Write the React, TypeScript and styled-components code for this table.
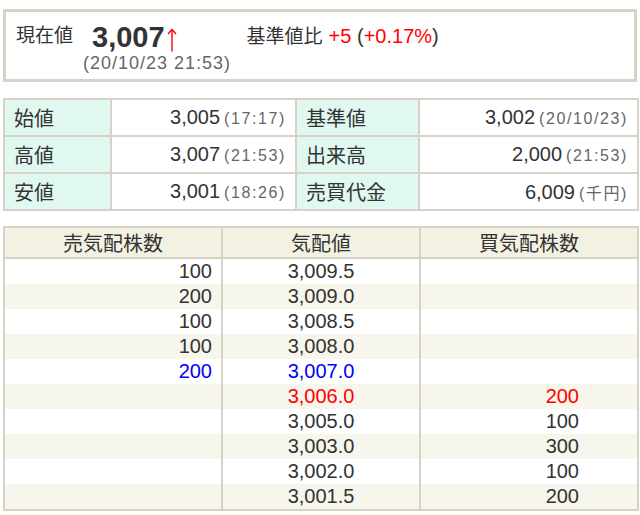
import React from 'react';
import styled, { createGlobalStyle } from 'styled-components';

const Global = createGlobalStyle`
  *, *::before, *::after { box-sizing: border-box; }
  html, body { margin: 0; padding: 0; background: #fff; }
  body {
    font-family: "Liberation Sans", "Noto Sans CJK JP", sans-serif;
    color: #333;
  }
`;

const Page = styled.div`
  width: 640px;
  padding: 9px 3px 0;
  display: flex;
  flex-direction: column;
`;

const PriceBox = styled.section`
  border: 3px solid #d6d3c6;
  height: 73px;
  padding: 9px 10px 0;
  display: flex;
  flex-direction: column;
`;

const PriceLine = styled.div`
  display: flex;
  align-items: center;
  height: 32px;
`;

const PriceLabel = styled.span`
  font-size: 19px;
  line-height: 1;
  margin-right: 19px;
  padding-bottom: 3px;
`;

const Price = styled.span`
  font-size: 29px;
  font-weight: bold;
  line-height: 1;
`;

const ArrowIcon = styled.svg`
  width: 10px;
  height: 24px;
  margin-left: 2px;
  margin-top: 6px;
`;

const Change = styled.div`
  margin-left: 70px;
  font-size: 19px;
  line-height: 1;
  padding-bottom: 3px;
  display: flex;
  align-items: baseline;
`;

const ChangeValue = styled.span`
  font-size: 20px;
  margin-left: 6px;
`;

const Red = styled.span`
  color: #ff0000;
`;

const Paren = styled.span`
  color: #333;
`;

const DateLine = styled.div`
  margin-left: 67px;
  font-size: 18px;
  line-height: 20px;
  letter-spacing: 1px;
  color: #666;
`;

const InfoTable = styled.table`
  margin-top: 16px;
  width: 634px;
  border-collapse: collapse;
  table-layout: fixed;
`;

const LabelCell = styled.th`
  background: #e0f8ef;
  border: 2px solid #d6d3c6;
  height: 37px;
  padding: 0 0 0 9px;
  text-align: left;
  font-weight: normal;
  font-size: 20px;
`;

const ValueCell = styled.td`
  border: 2px solid #d6d3c6;
  height: 37px;
  padding: 0 9px 0 0;
  text-align: right;
  font-size: 20px;
  white-space: nowrap;
`;

const Sub = styled.span`
  font-size: 16px;
  letter-spacing: 1.6px;
  color: #666;
  margin-left: 4px;
`;

const BoardTable = styled.table`
  margin-top: 15px;
  width: 634px;
  border-collapse: collapse;
  table-layout: fixed;
  border: 2px solid #d6d3c6;
`;

const HeadCell = styled.th`
  background: #f3f1e1;
  border: 2px solid #d6d3c6;
  height: 30px;
  padding: 0;
  font-weight: normal;
  font-size: 20px;
  text-align: center;
`;

const BoardRow = styled.tr<{ $alt: boolean }>`
  background: ${(p) => (p.$alt ? '#f7f6ec' : '#ffffff')};
`;

const BoardCell = styled.td<{ $align: 'left' | 'center' | 'right'; $pad?: number; $color?: string }>`
  height: 25px;
  padding: 0 ${(p) => p.$pad ?? 0}px 0 0;
  font-size: 20px;
  line-height: 25px;
  text-align: ${(p) => p.$align};
  color: ${(p) => p.$color ?? '#333'};
  border-left: 2px solid #d6d3c6;
  border-right: 2px solid #d6d3c6;
`;

const info = [
  ['始値', '3,005', '(17:17)', '基準値', '3,002', '(20/10/23)'],
  ['高値', '3,007', '(21:53)', '出来高', '2,000', '(21:53)'],
  ['安値', '3,001', '(18:26)', '売買代金', '6,009', '(千円)'],
];

type BoardRowData = { sell: string; price: string; buy: string; color?: string };

const board: BoardRowData[] = [
  { sell: '100', price: '3,009.5', buy: '' },
  { sell: '200', price: '3,009.0', buy: '' },
  { sell: '100', price: '3,008.5', buy: '' },
  { sell: '100', price: '3,008.0', buy: '' },
  { sell: '200', price: '3,007.0', buy: '', color: '#0000ff' },
  { sell: '', price: '3,006.0', buy: '200', color: '#ff0000' },
  { sell: '', price: '3,005.0', buy: '100' },
  { sell: '', price: '3,003.0', buy: '300' },
  { sell: '', price: '3,002.0', buy: '100' },
  { sell: '', price: '3,001.5', buy: '200' },
];

export default function App() {
  return (
    <>
      <Global />
      <Page>
        <PriceBox>
          <PriceLine>
            <PriceLabel>現在値</PriceLabel>
            <Price>3,007</Price>
            <ArrowIcon viewBox="0 0 10 24" aria-hidden="true">
              <path d="M5 1.5 V23.5" stroke="#ff0000" strokeWidth="1.4" fill="none" />
              <path d="M1 6 L5 1.5 L9 6" stroke="#ff0000" strokeWidth="1.4" fill="none" />
            </ArrowIcon>
            <Change>
              基準値比
              <ChangeValue>
                <Red>+5</Red> <Paren>(</Paren>
                <Red>+0.17%</Red>
                <Paren>)</Paren>
              </ChangeValue>
            </Change>
          </PriceLine>
          <DateLine>(20/10/23 21:53)</DateLine>
        </PriceBox>

        <InfoTable>
          <colgroup>
            <col style={{ width: 107 }} />
            <col style={{ width: 185 }} />
            <col style={{ width: 123 }} />
            <col style={{ width: 219 }} />
          </colgroup>
          <tbody>
            {info.map((r) => (
              <tr key={r[0]}>
                <LabelCell>{r[0]}</LabelCell>
                <ValueCell>
                  {r[1]}
                  <Sub>{r[2]}</Sub>
                </ValueCell>
                <LabelCell>{r[3]}</LabelCell>
                <ValueCell>
                  {r[4]}
                  <Sub>{r[5]}</Sub>
                </ValueCell>
              </tr>
            ))}
          </tbody>
        </InfoTable>

        <BoardTable>
          <colgroup>
            <col style={{ width: 218 }} />
            <col style={{ width: 198 }} />
            <col style={{ width: 218 }} />
          </colgroup>
          <thead>
            <tr>
              <HeadCell>売気配株数</HeadCell>
              <HeadCell>気配値</HeadCell>
              <HeadCell>買気配株数</HeadCell>
            </tr>
          </thead>
          <tbody>
            {board.map((r, i) => (
              <BoardRow key={r.price} $alt={i % 2 === 1}>
                <BoardCell $align="right" $pad={9} $color={r.color}>
                  {r.sell}
                </BoardCell>
                <BoardCell $align="center" $color={r.color}>
                  {r.price}
                </BoardCell>
                <BoardCell $align="right" $pad={58} $color={r.color}>
                  {r.buy}
                </BoardCell>
              </BoardRow>
            ))}
          </tbody>
        </BoardTable>
      </Page>
    </>
  );
}
